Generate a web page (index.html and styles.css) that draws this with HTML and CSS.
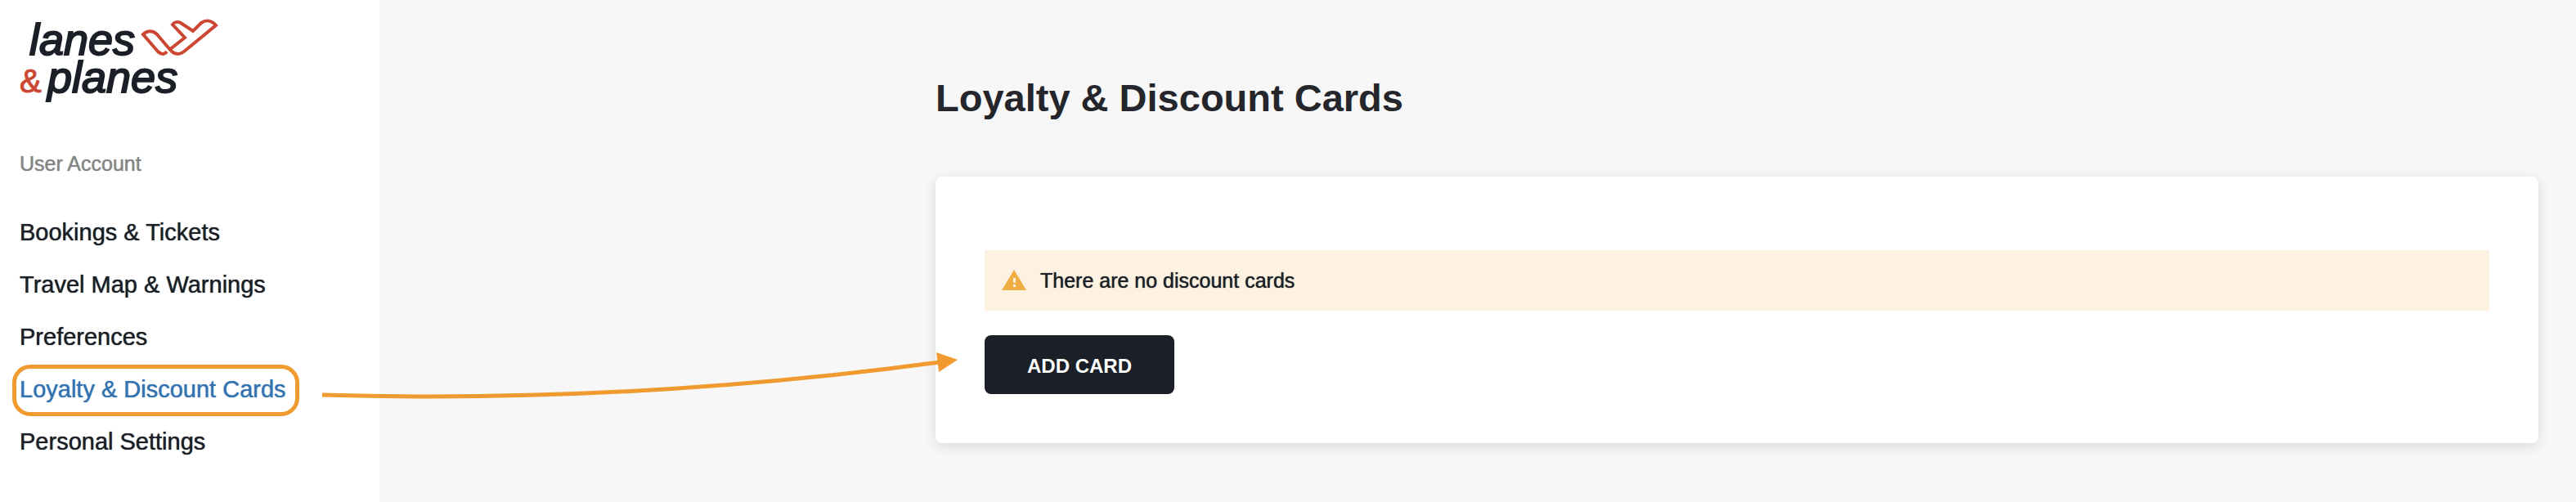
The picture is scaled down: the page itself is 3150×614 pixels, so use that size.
FILE: index.html
```
<!DOCTYPE html>
<html lang="en">
  <head>
    <meta charset="utf-8">
    <title>Loyalty &amp; Discount Cards</title>
    <link rel="stylesheet" href="styles.css">
  </head>
  <body>
    <div class="page">
      <aside class="sidebar">
        <!-- Logo -->
        <a href="#" class="logo" aria-label="lanes &amp; planes">
          <svg width="250" height="110" viewBox="0 0 250 110">
            <g class="logo-text">
              <text x="12" y="47">lanes</text>
              <text x="34" y="93">planes</text>
            </g>
            <text class="logo-amp" x="0" y="93">&amp;</text>
            <g class="logo-bird">
              <path d="M180 43 C177 47 173 47 169 43 L151 22 C156 17 163 17 168 22 L185 42"/>
              <path d="M185 42 C190 47 196 47 201 43 L240 11 C235 5 228 4 222 8 L212 18 L197 8 C193 6 189 7 187 10 L202 26 L183 41"/>
            </g>
          </svg>
        </a>

        <h2 class="sidebar-title">User Account</h2>

        <nav>
          <ul class="menu">
            <li><a href="#">Bookings &amp; Tickets</a></li>
            <li><a href="#">Travel Map &amp; Warnings</a></li>
            <li><a href="#">Preferences</a></li>
            <li class="active">
              <a href="#">Loyalty &amp; Discount Cards</a>
              <!-- Arrow from the menu item to the button -->
              <svg class="arrow" width="780" height="70" viewBox="0 0 780 70" aria-hidden="true">
                <path class="arrow-line" d="M1 57 Q375 68 756 17"/>
                <path class="arrow-head" d="M752 5 L778 14 L755 29 Z"/>
              </svg>
            </li>
            <li><a href="#">Personal Settings</a></li>
          </ul>
        </nav>
      </aside>

      <main class="content">
        <h1>Loyalty &amp; Discount Cards</h1>
        <section class="card">
          <div class="alert">
            <svg width="30" height="26" viewBox="0 0 30 26" aria-hidden="true">
              <path fill="#efad43" d="M15 0 L30 25 H0 Z"/>
              <path fill="#fdf2e1" d="M14 10 h3 v6 h-3 Z M14 18 h3 v3 h-3 Z"/>
            </svg>
            <span>There are no discount cards</span>
          </div>
          <button type="button" class="add-button">ADD CARD</button>
        </section>
      </main>
    </div>
  </body>
</html>
```

FILE: styles.css
```
*,
*::before {
  box-sizing: border-box;
}

body {
  margin: 0;
  background-color: #f7f7f7;
  color: #1b1f27;
  font-family: "Liberation Sans", Arial, sans-serif;
}

.page {
  display: flex;
  min-height: 100vh;
}

.sidebar {
  flex: 0 0 464px;
  padding: 20px 24px 0;
  background-color: #fff;
}

/* Logo */
.logo,
.logo svg {
  display: block;
  overflow: visible;
}

.logo-text {
  fill: #1b1f27;
  stroke: #1b1f27;
  stroke-width: 2px;
  font-size: 54px;
  font-style: italic;
}

.logo-amp {
  fill: #cc4733;
  stroke: #cc4733;
  stroke-width: 1px;
  font-size: 40px;
}

.logo-bird {
  fill: none;
  stroke: #cc4733;
  stroke-width: 4px;
}

/* Menu */
.sidebar-title {
  margin: 54px 0 36px;
  color: #858585;
  font-size: 25px;
  font-weight: 400;
  line-height: 32px;
  text-shadow: 0 0 1px currentColor;
}

.menu {
  margin: 0;
  padding: 0;
  list-style: none;
}

.menu li {
  position: relative;
}

.menu a {
  display: block;
  color: #1b1f27;
  font-size: 29px;
  line-height: 64px;
  text-decoration: none;
  text-shadow: 0 0 1px currentColor;
}

.menu .active a {
  color: #3572b0;
}

/* Frame around the active item */
.active::before {
  content: "";
  position: absolute;
  top: 2px;
  left: -9px;
  width: 351px;
  height: 63px;
  border: 5px solid #f09a30;
  border-radius: 22px;
  pointer-events: none;
}

.arrow {
  position: absolute;
  top: -18px;
  left: 369px;
  pointer-events: none;
}

.arrow-line {
  fill: none;
  stroke: #f09a30;
  stroke-width: 5px;
}

.arrow-head {
  fill: #f09a30;
}

/* Content */
.content {
  flex: 1;
  padding: 90px 46px 72px 680px;
}

h1 {
  margin: 0 0 66px;
  color: #24262b;
  font-size: 47px;
  line-height: 60px;
}

.card {
  padding: 90px 60px 60px;
  border-radius: 8px;
  background-color: #fff;
  box-shadow: 0 4px 16px rgba(0, 0, 0, 0.12);
}

.alert {
  display: flex;
  align-items: center;
  gap: 17px;
  height: 74px;
  margin-bottom: 30px;
  padding: 0 21px;
  background-color: #fdf2e1;
  font-size: 25px;
  text-shadow: 0 0 1px currentColor;
}

.add-button {
  display: block;
  width: 232px;
  height: 72px;
  padding: 4px 0 0;
  border: none;
  border-radius: 8px;
  background-color: #1b1f27;
  color: #fff;
  font-family: inherit;
  font-size: 24px;
  font-weight: 700;
  cursor: pointer;
}

@media (max-width: 2000px) {
  .content {
    padding-left: 46px;
  }

  .arrow {
    display: none;
  }
}
```
